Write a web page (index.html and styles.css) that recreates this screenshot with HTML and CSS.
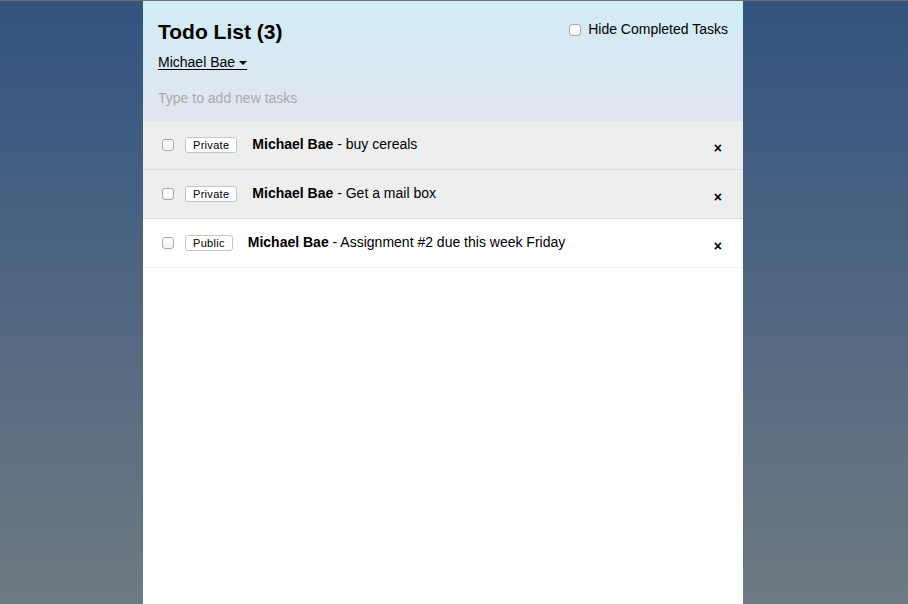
FILE: index.html
```html
<!DOCTYPE html>
<html>
<head>
<meta charset="utf-8">
<title>Todo List</title>
<link rel="stylesheet" href="styles.css">
</head>
<body>
<div class="topline"></div>
<div class="container">
  <header class="header">
    <div class="header-top">
      <h1 class="title">Todo List (3)</h1>
      <label class="hide-completed">
        <input type="checkbox" class="cb">
        <span>Hide Completed Tasks</span>
      </label>
    </div>
    <div class="login"><span class="login-link">Michael Bae <span class="caret"></span></span></div>
    <form class="new-task">
      <input type="text" class="new-input" placeholder="Type to add new tasks">
    </form>
  </header>
  <ul class="tasks">
    <li class="task private">
      <input type="checkbox" class="cb">
      <button class="toggle">Private</button>
      <span class="text"><strong>Michael Bae</strong> - buy cereals</span>
      <button class="delete">&times;</button>
    </li>
    <li class="task private">
      <input type="checkbox" class="cb">
      <button class="toggle">Private</button>
      <span class="text"><strong>Michael Bae</strong> - Get a mail box</span>
      <button class="delete">&times;</button>
    </li>
    <li class="task">
      <input type="checkbox" class="cb">
      <button class="toggle">Public</button>
      <span class="text"><strong>Michael Bae</strong> - Assignment #2 due this week Friday</span>
      <button class="delete">&times;</button>
    </li>
  </ul>
</div>
</body>
</html>
```
FILE: styles.css
```css
html, body {
  height: 100%;
}
body {
  margin: 0;
  padding: 0;
  font-family: "Liberation Sans", Arial, sans-serif;
  font-size: 14px;
  color: #000;
  background: linear-gradient(to bottom, #315481 0%, #6f7a82 100%);
  display: flex;
  flex-direction: column;
  overflow: hidden;
}
.topline {
  height: 1px;
  background: #6e6e6e;
  flex: none;
}
.container {
  width: 600px;
  margin: 0 0 0 143px;
  flex: 1;
  background: #fff;
}
.header {
  background: linear-gradient(to bottom, #d0edf5, #e1e5f0 100%);
  padding: 19px 15px 15px 15px;
}
.header-top {
  display: flex;
  justify-content: space-between;
  align-items: flex-start;
}
.title {
  font-size: 21px;
  line-height: 24px;
  margin: 0 0 10px 0;
  font-weight: bold;
}
.hide-completed {
  display: flex;
  align-items: center;
  margin-top: 1px;
  font-size: 14px;
  line-height: 17px;
}
.hide-completed .cb {
  margin: 0 7px 0 0;
}
.cb {
  -webkit-appearance: none;
  appearance: none;
  width: 12px;
  height: 12px;
  border: 1px solid #a9a9a9;
  border-radius: 3px;
  background: linear-gradient(to bottom, #fff, #f3f3f3);
  box-sizing: border-box;
  flex: none;
}
.login {
  line-height: 16px;
  height: 16px;
}
.login-link {
  display: inline-flex;
  align-items: center;
  line-height: 14px;
  border-bottom: 1px solid #000;
}
.caret {
  display: inline-block;
  width: 0;
  height: 0;
  margin-left: 4px;
  border-left: 4px solid transparent;
  border-right: 4px solid transparent;
  border-top: 4px solid #000;
  margin-top: 1px;
}
.new-task {
  margin: 10px 0 -10px 0;
}
.new-input {
  box-sizing: border-box;
  width: 100%;
  padding: 10px 80px 10px 0;
  border: none;
  background: transparent;
  font-family: "Liberation Sans", Arial, sans-serif;
  font-size: 14px;
  line-height: 16px;
  height: 36px;
}
.new-input::placeholder {
  color: #a9a9a9;
}
.tasks {
  margin: 0;
  padding: 0;
  list-style: none;
}
.task {
  display: flex;
  align-items: center;
  height: 48px;
  padding: 0 15px;
  border-bottom: 1px solid #eee;
  background: #fff;
}
.task.private {
  background: #eee;
  border-color: #ddd;
}
.task .cb {
  margin: 0 0 0 4px;
}
.toggle {
  margin-left: 11px;
  font-family: "Liberation Sans", Arial, sans-serif;
  font-size: 11px;
  line-height: 13px;
  padding: 1px 7px 0 7px;
  height: 16px;
  border: 1px solid #c4c4c4;
  border-radius: 3px;
  background: #fff;
  color: #000;
  box-sizing: border-box;
  letter-spacing: 0.3px;
}
.text {
  margin-left: 15px;
  margin-top: -3px;
}
.delete {
  margin-left: auto;
  margin-top: 5px;
  background: none;
  border: none;
  font-family: "Liberation Sans", Arial, sans-serif;
  font-weight: bold;
  font-size: 14px;
  padding: 0 6px;
  color: #000;
}
```
